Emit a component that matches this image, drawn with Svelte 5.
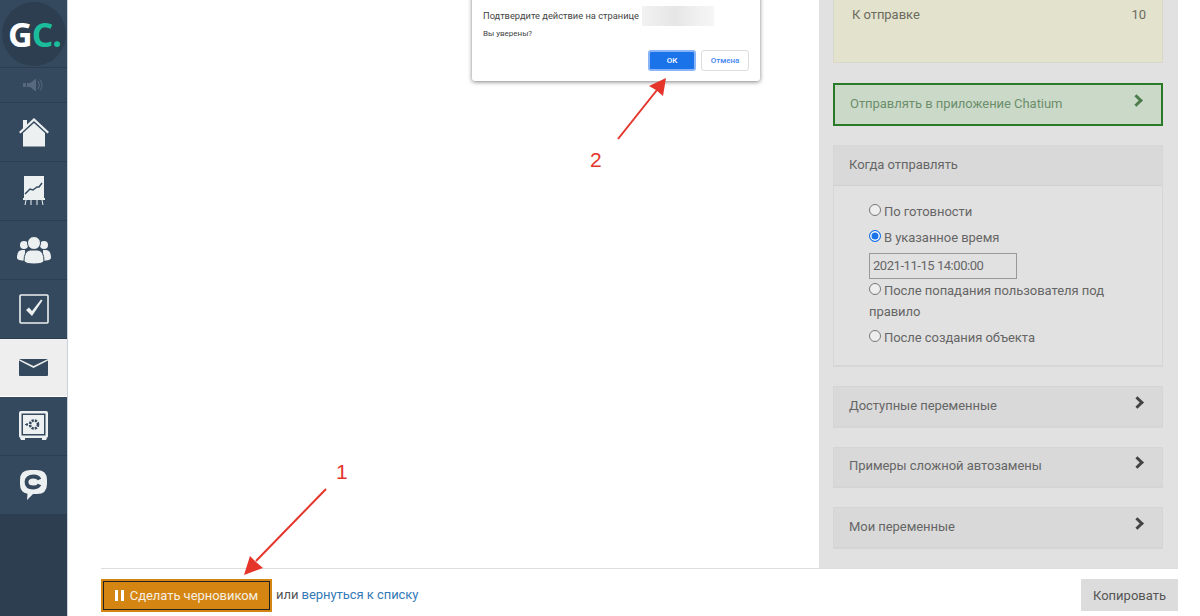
<script>
  const options = [
    { label: 'По готовности', checked: false },
    { label: 'В указанное время', checked: true, date: '2021-11-15 14:00:00' },
    { label: 'После попадания пользователя под правило', checked: false },
    { label: 'После создания объекта', checked: false }
  ];
  const accordions = ['Доступные переменные', 'Примеры сложной автозамены', 'Мои переменные'];
</script>

<div class="page">
  <nav class="sidebar">
    <div class="logo-item">
      <div class="logo"><span class="g">G</span><span class="c">C.</span></div>
    </div>
    <div class="item speaker">
      <svg width="22" height="14" viewBox="0 0 22 14"><rect x="0" y="5" width="3" height="4" fill="#56697d"/><path d="M4 5h3l6-4.500v13l-6-4.500h-3z" fill="#56697d"/><path d="M15 3q3 4 0 8M17 1.500q4 5.500 0 11" fill="none" stroke="#56697d" stroke-width="1"/></svg>
    </div>
    <div class="item home">
      <svg width="32" height="30" viewBox="0 0 32 30"><path d="M1 15 16 1l15 14-1.500 1.500L16 4 2.500 16.500z" fill="#ecf0f1"/><path d="M5 16 16 6l11 10v13.500H5z" fill="#ecf0f1"/><path d="M5 3h4v5l-4 4z" fill="#ecf0f1"/></svg>
    </div>
    <div class="item chart">
      <svg width="22" height="30" viewBox="0 0 22 30"><rect x="1" y="0" width="20" height="22" fill="#ecf0f1"/><rect x="0" y="22" width="22" height="2" fill="#ecf0f1"/><path d="M2 18l5-5 3 1 4-3 2 0 3-4" fill="none" stroke="#34495e" stroke-width="1.500"/><path d="M3 24l-1 5M8 24v5M14 24v5M19 24l1 5" stroke="#ecf0f1" stroke-width="1"/></svg>
    </div>
    <div class="item people">
      <svg width="34" height="29" viewBox="0 0 34 29"><circle cx="7" cy="9" r="4" fill="#ecf0f1"/><circle cx="27" cy="9" r="4" fill="#ecf0f1"/><path d="M0 22q0-8 5-8h3v11l-6-1q-2-1-2-2zM34 22q0-8-5-8h-3v11l6-1q2-1 2-2z" fill="#ecf0f1"/><circle cx="17" cy="7" r="6.500" fill="#ecf0f1" stroke="#34495e"/><path d="M7 25q0-10 6-11h8q6 1 6 11-1 3-10 3t-10-3z" fill="#ecf0f1" stroke="#34495e"/></svg>
    </div>
    <div class="item check">
      <svg width="30" height="30" viewBox="0 0 30 30"><rect x="1" y="1" width="28" height="28" rx="1" fill="none" stroke="#ecf0f1" stroke-width="1.600"/><path d="M7 16l3-2.500 3 3.500 9-11.500 1.500 1L13 22z" fill="#ecf0f1"/></svg>
    </div>
    <div class="item mail">
      <svg width="29" height="17" viewBox="0 0 29 17"><path d="M0 1.500 14.500 9 29 1.500V16q0 1-1 1H1q-1 0-1-1z" fill="#34495e"/><path d="M0 0h29L14.500 7z" fill="#34495e"/></svg>
    </div>
    <div class="item safe">
      <svg width="30" height="30" viewBox="0 0 30 30"><rect x="0" y="0" width="29" height="27" rx="2" fill="#ecf0f1"/><rect x="2.500" y="2.500" width="24" height="22" fill="#34495e"/><rect x="4" y="4" width="21" height="19" fill="#ecf0f1"/><path d="M1 27h5v2H2zM23 27h5l-1 2h-4z" fill="#ecf0f1"/><circle cx="15" cy="13.500" r="4" fill="none" stroke="#34495e" stroke-width="2.600" stroke-dasharray="2.200 1"/><path d="M6 13.500h3M8 12v3" stroke="#34495e" stroke-width="1.200"/></svg>
    </div>
    <div class="item chat">
      <svg width="27" height="30" viewBox="0 0 27 30"><path d="M10 0h7q10 0 10 10v4q0 10-10 10h-4l-6 6 .5-6.200Q0 22.500 0 14v-4Q0 0 10 0z" fill="#ecf0f1"/><path d="M19.500 9.500q-1.500-3-6-3-7 0-7 5.500t7 5.500q4.500 0 6-3" fill="none" stroke="#34495e" stroke-width="3.800"/></svg>
    </div>
  </nav>

  <main class="main">
    <div class="content">
      <div class="canvas">
        <div class="dialog">
          <div class="dialog-title">Подтвердите действие на странице <span class="blur"></span></div>
          <div class="dialog-sub">Вы уверены?</div>
          <div class="dialog-actions">
            <button class="ok">ОК</button>
            <button class="cancel">Отмена</button>
          </div>
        </div>
        <svg class="arrows" width="752" height="568" viewBox="67 0 752 568">
          <path d="M617 139 656 90" stroke="#e5352b" stroke-width="2"/>
          <path d="M665 78 648 86 655 90 662 96z" fill="#e5352b"/>
          <path d="M325 489 255 561" stroke="#e5352b" stroke-width="2"/>
          <path d="M243 575 249 556 255 562 262 568z" fill="#e5352b"/>
        </svg>
        <span class="num one">1</span>
        <span class="num two">2</span>
      </div>

      <aside class="panel">
        <div class="stats">
          <span>К отправке</span><span>10</span>
        </div>

        <div class="chatium">
          <span>Отправлять в приложение Chatium</span>
          <i class="chevron green"></i>
        </div>

        <section class="when">
          <header>Когда отправлять</header>
          <div class="when-body">
            {#each options as opt}
              <div class="opt">
                <span class="radio" class:on={opt.checked}></span>{opt.label}
              </div>
              {#if opt.date}
                <div class="date">{opt.date}</div>
              {/if}
            {/each}
          </div>
        </section>

        {#each accordions as title}
          <div class="accordion">
            <span>{title}</span>
            <i class="chevron"></i>
          </div>
        {/each}
      </aside>
      <div class="gutter"></div>
    </div>

    <footer class="bottom">
      <button class="draft">
        <span class="pause"></span>Сделать черновиком
      </button>
      <span class="or">или <a href="#list">вернуться к списку</a></span>
      <button class="copy">Копировать</button>
    </footer>
  </main>
</div>

<style>
  :global(body) {
    margin: 0;
    background: #fff;
  }

  .page {
    display: flex;
    width: 1200px;
    height: 616px;
    overflow: hidden;
    font-family: Roboto, "Liberation Sans", sans-serif;
    font-size: 13px;
    letter-spacing: -0.05px;
    color: #666;
  }

  .sidebar {
    width: 67px;
    flex: none;
    height: 616px;
    background: linear-gradient(#2c3e50, #2c3e50) 0 514px / 100% 102px no-repeat #34495e;
    display: flex;
    flex-direction: column;
    border-right: 1px solid #c9d2da;
  }

  .logo-item {
    height: 68px;
    flex: none;
    display: flex;
    align-items: center;
    justify-content: center;
    border-bottom: 1px solid #2c3e50;
    box-sizing: border-box;
  }

  .logo {
    width: 64px;
    height: 64px;
    border-radius: 50%;
    background: #2c3e50;
    display: flex;
    align-items: center;
    justify-content: center;
    padding-left: 2px;
    box-sizing: border-box;
    font-family: "Open Sans", sans-serif;
    font-weight: 700;
    font-size: 34px;
    letter-spacing: -1px;
  }

  .g { color: #fff; }
  .c { color: #1abc9c; }

  .item {
    height: 59px;
    flex: none;
    display: flex;
    align-items: center;
    justify-content: center;
    border-bottom: 1px solid #2c3e50;
    box-sizing: border-box;
  }

  .speaker { height: 35px; }
  .mail {
    height: 58px;
    background: #eee;
    border-bottom: 1px solid #fff;
  }

  .main {
    flex: 1;
    min-width: 0;
    display: flex;
    flex-direction: column;
  }

  .content {
    height: 568px;
    flex: none;
    display: flex;
  }

  .canvas {
    flex: 1;
    position: relative;
  }

  .dialog {
    position: absolute;
    left: 404px;
    top: -40px;
    width: 288px;
    height: 121px;
    box-sizing: border-box;
    background: #fff;
    border-radius: 3px;
    box-shadow: 0 1px 4px rgba(0, 0, 0, 0.5);
    padding: 46px 11px 0;
    color: #444;
    letter-spacing: 0;
  }

  .dialog-title {
    font-size: 9.300px;
    height: 19px;
    display: flex;
    align-items: center;
    gap: 3px;
  }

  .blur {
    display: inline-block;
    width: 72px;
    height: 20px;
    background: linear-gradient(90deg, #f2f2f2, #e6e6e6 45%, #eee 70%, #f6f6f6);
  }

  .dialog-sub {
    font-size: 8px;
    margin-top: 4px;
  }

  .dialog-actions {
    display: flex;
    justify-content: flex-end;
    gap: 5px;
    margin-top: 12px;
  }

  .dialog-actions button {
    height: 21px;
    box-sizing: border-box;
    border-radius: 3px;
    font-family: Roboto, sans-serif;
    font-size: 8px;
    font-weight: 500;
    padding: 0;
  }

  .ok {
    width: 48px;
    background: #1a73e8;
    border: 2px solid #8ab4f8;
    color: #fff;
    font-weight: 700;
  }

  .cancel {
    width: 48px;
    background: #fff;
    border: 1px solid #dadce0;
    color: #4285f4;
  }

  .arrows {
    position: absolute;
    left: 0;
    top: 0;
    overflow: visible;
  }

  .num {
    position: absolute;
    color: #e5352b;
    font-family: "Liberation Sans", sans-serif;
    font-size: 21px;
    line-height: 24px;
  }

  .one { left: 268px; top: 460px; }
  .two { left: 522px; top: 148px; }

  .panel {
    width: 359px;
    flex: none;
    box-sizing: border-box;
    background: #e1e1e1;
    padding: 0 15px 0 14px;
    display: flex;
    flex-direction: column;
  }

  .stats {
    height: 63px;
    flex: none;
    box-sizing: border-box;
    background: #e2e2cd;
    border: 1px solid #d8d8c8;
    border-top: 0;
    padding: 5px 16px 0 18px;
    display: flex;
    justify-content: space-between;
    line-height: 20px;
    color: #6b6b60;
  }

  .chatium {
    margin-top: 20px;
    height: 43px;
    flex: none;
    box-sizing: border-box;
    background: #cbd9c9;
    border: 2px solid #2a7a2a;
    padding: 0 15px 2px;
    display: flex;
    justify-content: space-between;
    align-items: center;
    color: #6b8f6b;
  }

  .when {
    margin-top: 19px;
    height: 222px;
    flex: none;
    box-sizing: border-box;
    border: 1px solid #d6d6d6;
    border-bottom-width: 2px;
  }

  .when header {
    height: 40px;
    box-sizing: border-box;
    background: #d9d9d9;
    border-bottom: 1px solid #d0d0d0;
    padding: 0 15px;
    line-height: 38px;
  }

  .when-body {
    padding: 15px 35px 0;
    line-height: 21px;
  }

  .opt { margin-bottom: 5px; }
  .opt:nth-child(3) { margin-bottom: 0; }

  .radio {
    display: inline-block;
    box-sizing: border-box;
    width: 12px;
    height: 12px;
    border-radius: 50%;
    border: 1px solid #777;
    background: #eee;
    margin-right: 3px;
    vertical-align: 0;
  }

  .radio.on {
    border: 1px solid #1a73e8;
    background: #1a73e8;
    box-shadow: inset 0 0 0 1.500px #fff;
  }

  .date {
    width: 148px;
    height: 26px;
    box-sizing: border-box;
    border: 1px solid #999;
    padding: 0 3px;
    line-height: 23px;
    margin-bottom: 1px;
    letter-spacing: -0.45px;
  }

  .accordion {
    margin-top: 19px;
    height: 41.500px;
    flex: none;
    box-sizing: border-box;
    background: #d9d9d9;
    border: 1px solid #d5d5d5;
    border-bottom-width: 2px;
    padding: 0 15px 2px;
    display: flex;
    justify-content: space-between;
    align-items: center;
  }

  .chevron {
    width: 6px;
    height: 6px;
    border-top: 3px solid #444;
    border-right: 3px solid #444;
    transform: rotate(45deg);
    margin: -6px 5px 0 0;
  }

  .chevron.green { border-color: #4d7c4d; }

  .gutter { width: 22px; flex: none; }

  .bottom {
    flex: 1;
    display: flex;
    align-items: flex-start;
    margin: 0 22px 0 33px;
    padding-top: 10px;
    border-top: 1px solid #ddd;
    gap: 4px;
  }

  .draft {
    width: 171px;
    height: 33px;
    box-sizing: border-box;
    background: #d58512;
    border: 2px solid #d58512;
    box-shadow: inset 0 0 0 1px #222;
    color: #f5efe2;
    font-family: inherit;
    font-size: 13px;
    letter-spacing: inherit;
    padding: 0;
    display: flex;
    align-items: center;
    justify-content: center;
    gap: 6px;
  }

  .pause {
    width: 9px;
    height: 11px;
    border-left: 3.500px solid #fff;
    border-right: 3.500px solid #fff;
    box-sizing: border-box;
  }

  .or {
    color: #555;
    line-height: 31px;
  }
  .or a { color: #337ab7; text-decoration: none; }

  .copy {
    margin-left: auto;
    width: 97px;
    height: 32px;
    border: 0;
    background: #dcdcdc;
    color: #555;
    font-family: inherit;
    font-size: 13px;
    padding: 0;
  }
</style>
